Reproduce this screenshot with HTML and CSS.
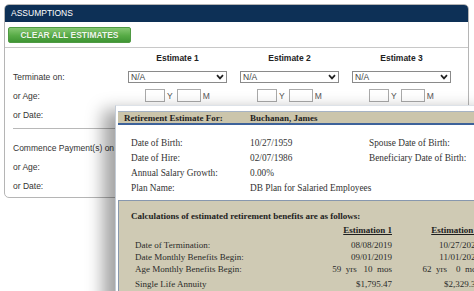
FILE: index.html
```html
<!DOCTYPE html>
<html lang="en">
<head>
  <meta charset="UTF-8">
  <meta name="viewport" content="width=device-width, initial-scale=1.0">
  <title>Assumptions</title>
  <link rel="stylesheet" href="styles.css">
</head>
<body>
  <div class="panel">
    <div class="panel-head">ASSUMPTIONS</div>
    <div class="toolbar">
      <button class="btn-clear">CLEAR ALL ESTIMATES</button>
    </div>

    <div class="grid">
      <div></div>
      <div class="col-head">Estimate 1</div>
      <div class="col-head">Estimate 2</div>
      <div class="col-head">Estimate 3</div>

      <div class="label">Terminate on:</div>
      <div class="cell"><div class="select">N/A <svg width="8" height="6" viewBox="0 0 8 6"><path d="M1 1.2 L4 4.4 L7 1.2" fill="none" stroke="#222" stroke-width="1.7"/></svg></div></div>
      <div class="cell"><div class="select">N/A <svg width="8" height="6" viewBox="0 0 8 6"><path d="M1 1.2 L4 4.4 L7 1.2" fill="none" stroke="#222" stroke-width="1.7"/></svg></div></div>
      <div class="cell"><div class="select">N/A <svg width="8" height="6" viewBox="0 0 8 6"><path d="M1 1.2 L4 4.4 L7 1.2" fill="none" stroke="#222" stroke-width="1.7"/></svg></div></div>

      <div class="label">or Age:</div>
      <div class="cell"><div class="age"><input class="yr"><span>Y</span><input class="mo"><span>M</span></div></div>
      <div class="cell"><div class="age"><input class="yr"><span>Y</span><input class="mo"><span>M</span></div></div>
      <div class="cell"><div class="age"><input class="yr"><span>Y</span><input class="mo"><span>M</span></div></div>

      <div class="label">or Date:</div>
      <div></div><div></div><div></div>
    </div>

    <div class="divider"></div>

    <div class="grid">
      <div class="label">Commence Payment(s) on</div>
      <div></div><div></div><div></div>
      <div class="label">or Age:</div>
      <div></div><div></div><div></div>
      <div class="label">or Date:</div>
      <div></div><div></div><div></div>
    </div>
  </div>

  <div class="popup">
    <div class="popup-head">
      <span class="who-label">Retirement Estimate For:</span>
      <span>Buchanan, James</span>
    </div>

    <div class="info">
      <div>Date of Birth:</div><div>10/27/1959</div><div>Spouse Date of Birth:</div>
      <div>Date of Hire:</div><div>02/07/1986</div><div>Beneficiary Date of Birth:</div>
      <div>Annual Salary Growth:</div><div>0.00%</div><div></div>
      <div>Plan Name:</div><div class="wide">DB Plan for Salaried Employees</div>
    </div>

    <div class="calc">
      <div class="calc-title">Calculations of estimated retirement benefits are as follows:</div>
      <div class="calc-table">
        <div></div>
        <div class="est-head">Estimation 1</div>
        <div class="est-head">Estimation 2</div>

        <div>Date of Termination:</div>
        <div class="num">08/08/2019</div>
        <div class="num">10/27/2021</div>

        <div>Date Monthly Benefits Begin:</div>
        <div class="num">09/01/2019</div>
        <div class="num">11/01/2021</div>

        <div>Age Monthly Benefits Begin:</div>
        <div class="num">59  yrs   10  mos</div>
        <div class="num">62  yrs    0  mos</div>

        <div class="gap">Single Life Annuity</div>
        <div class="num gap">$1,795.47</div>
        <div class="num gap">$2,329.31</div>
      </div>
    </div>
  </div>
</body>
</html>
```

FILE: styles.css
```css
* {
  box-sizing: border-box;
}

html, body {
  overflow: hidden;
}

body {
  margin: 0;
  width: 474px;
  height: 291px;
  background: #fff;
  font-family: 'Liberation Sans', Arial, sans-serif;
  font-size: 8.5px;
  color: #333;
  position: relative;
}

.panel {
  margin: 4px 0 0 4px;
  width: 465px;
  height: 194px;
  border: 1px solid #b5b5b5;
  border-radius: 5px;
  overflow: hidden;
}

.panel-head {
  height: 18px;
  background: #0d3056;
  color: #fff;
  padding-left: 7px;
  line-height: 18px;
  margin: -1px -1px 0;
}

.toolbar {
  padding: 5px 0 4px 3px;
  border-bottom: 1px solid #c8c8c8;
}

.btn-clear {
  display: block;
  width: 123px;
  height: 16px;
  padding: 0;
  border: 1px solid #4f9a43;
  border-radius: 2px;
  background: linear-gradient(#86c873, #57ab46 55%, #3f9534);
  color: #eef8ea;
  font-family: inherit;
  font-size: 8.5px;
  font-weight: bold;
  text-shadow: 0 0 1px rgba(0, 0, 0, 0.3);
}

.grid {
  display: grid;
  grid-template-columns: 115px repeat(3, 112px);
  grid-auto-rows: 19px;
  padding-left: 8px;
}

.label,
.col-head,
.cell {
  display: flex;
  align-items: center;
  white-space: nowrap;
}

.col-head {
  width: 99px;
  justify-content: center;
  font-weight: bold;
  color: #222;
}

.select {
  width: 99px;
  height: 12px;
  border: 1px solid #8a8a8a;
  background: #fff;
  display: flex;
  align-items: center;
  justify-content: space-between;
  padding: 0 2px 0 2px;
  color: #444;
}

.age {
  width: 99px;
  display: flex;
  align-items: center;
  justify-content: center;
  color: #555;
}

.age input {
  height: 13px;
  border: 1px solid #aaa;
  padding: 0;
  margin: 0;
  background: #fff;
}

.age .yr {
  width: 20px;
  margin-right: 2px;
}

.age .mo {
  width: 24px;
  margin: 0 2px 0 4px;
}

.divider {
  margin: 4px 8px 9px;
  border-top: 1px solid #b8b8b8;
}

/* overlay report */
.popup {
  position: absolute;
  left: 115px;
  top: 105px;
  width: 380px;
  height: 200px;
  background: #fff;
  border-left: 1px solid #c3cbd5;
  border-top: 1px solid #dde2e8;
  padding: 5px 0 0 2px;
  box-shadow: -12px 5px 16px rgba(0, 0, 0, 0.36);
  font-family: 'Liberation Serif', 'Times New Roman', serif;
  font-size: 9.3px;
  color: #333;
}

.popup-head {
  height: 14px;
  background: #cbc5ab;
  border-top: 1px solid #a6b3c4;
  border-bottom: 2px solid #3d629a;
  display: flex;
  align-items: center;
  padding-left: 6px;
  font-weight: bold;
  font-size: 9px;
  color: #1e1e1e;
}

.who-label {
  width: 126px;
}

.info {
  display: grid;
  grid-template-columns: 119px 119px auto;
  grid-auto-rows: 15px;
  align-items: center;
  padding: 10px 0 0 13px;
  white-space: nowrap;
}

.info .wide {
  grid-column: span 2;
}

.calc {
  margin-top: 5px;
  height: 100px;
  background: #cfcab4;
  border: 1px solid #8797ae;
  padding: 9px 0 0 12px;
  color: #2a2a2a;
  font-size: 9px;
}

.calc-title {
  font-weight: bold;
  line-height: 12px;
  color: #1e1e1e;
}

.calc-table {
  display: grid;
  grid-template-columns: 169px 88px 88px;
  grid-template-rows: 15px 12px 12px 12px 16px;
  align-items: center;
  padding: 2px 0 0 4px;
  white-space: pre;
}

.est-head {
  text-align: right;
  font-weight: bold;
  text-decoration: underline;
  color: #1e1e1e;
  margin-bottom: 3px;
}

.num {
  text-align: right;
}

.gap {
  margin-top: 2px;
}
```
